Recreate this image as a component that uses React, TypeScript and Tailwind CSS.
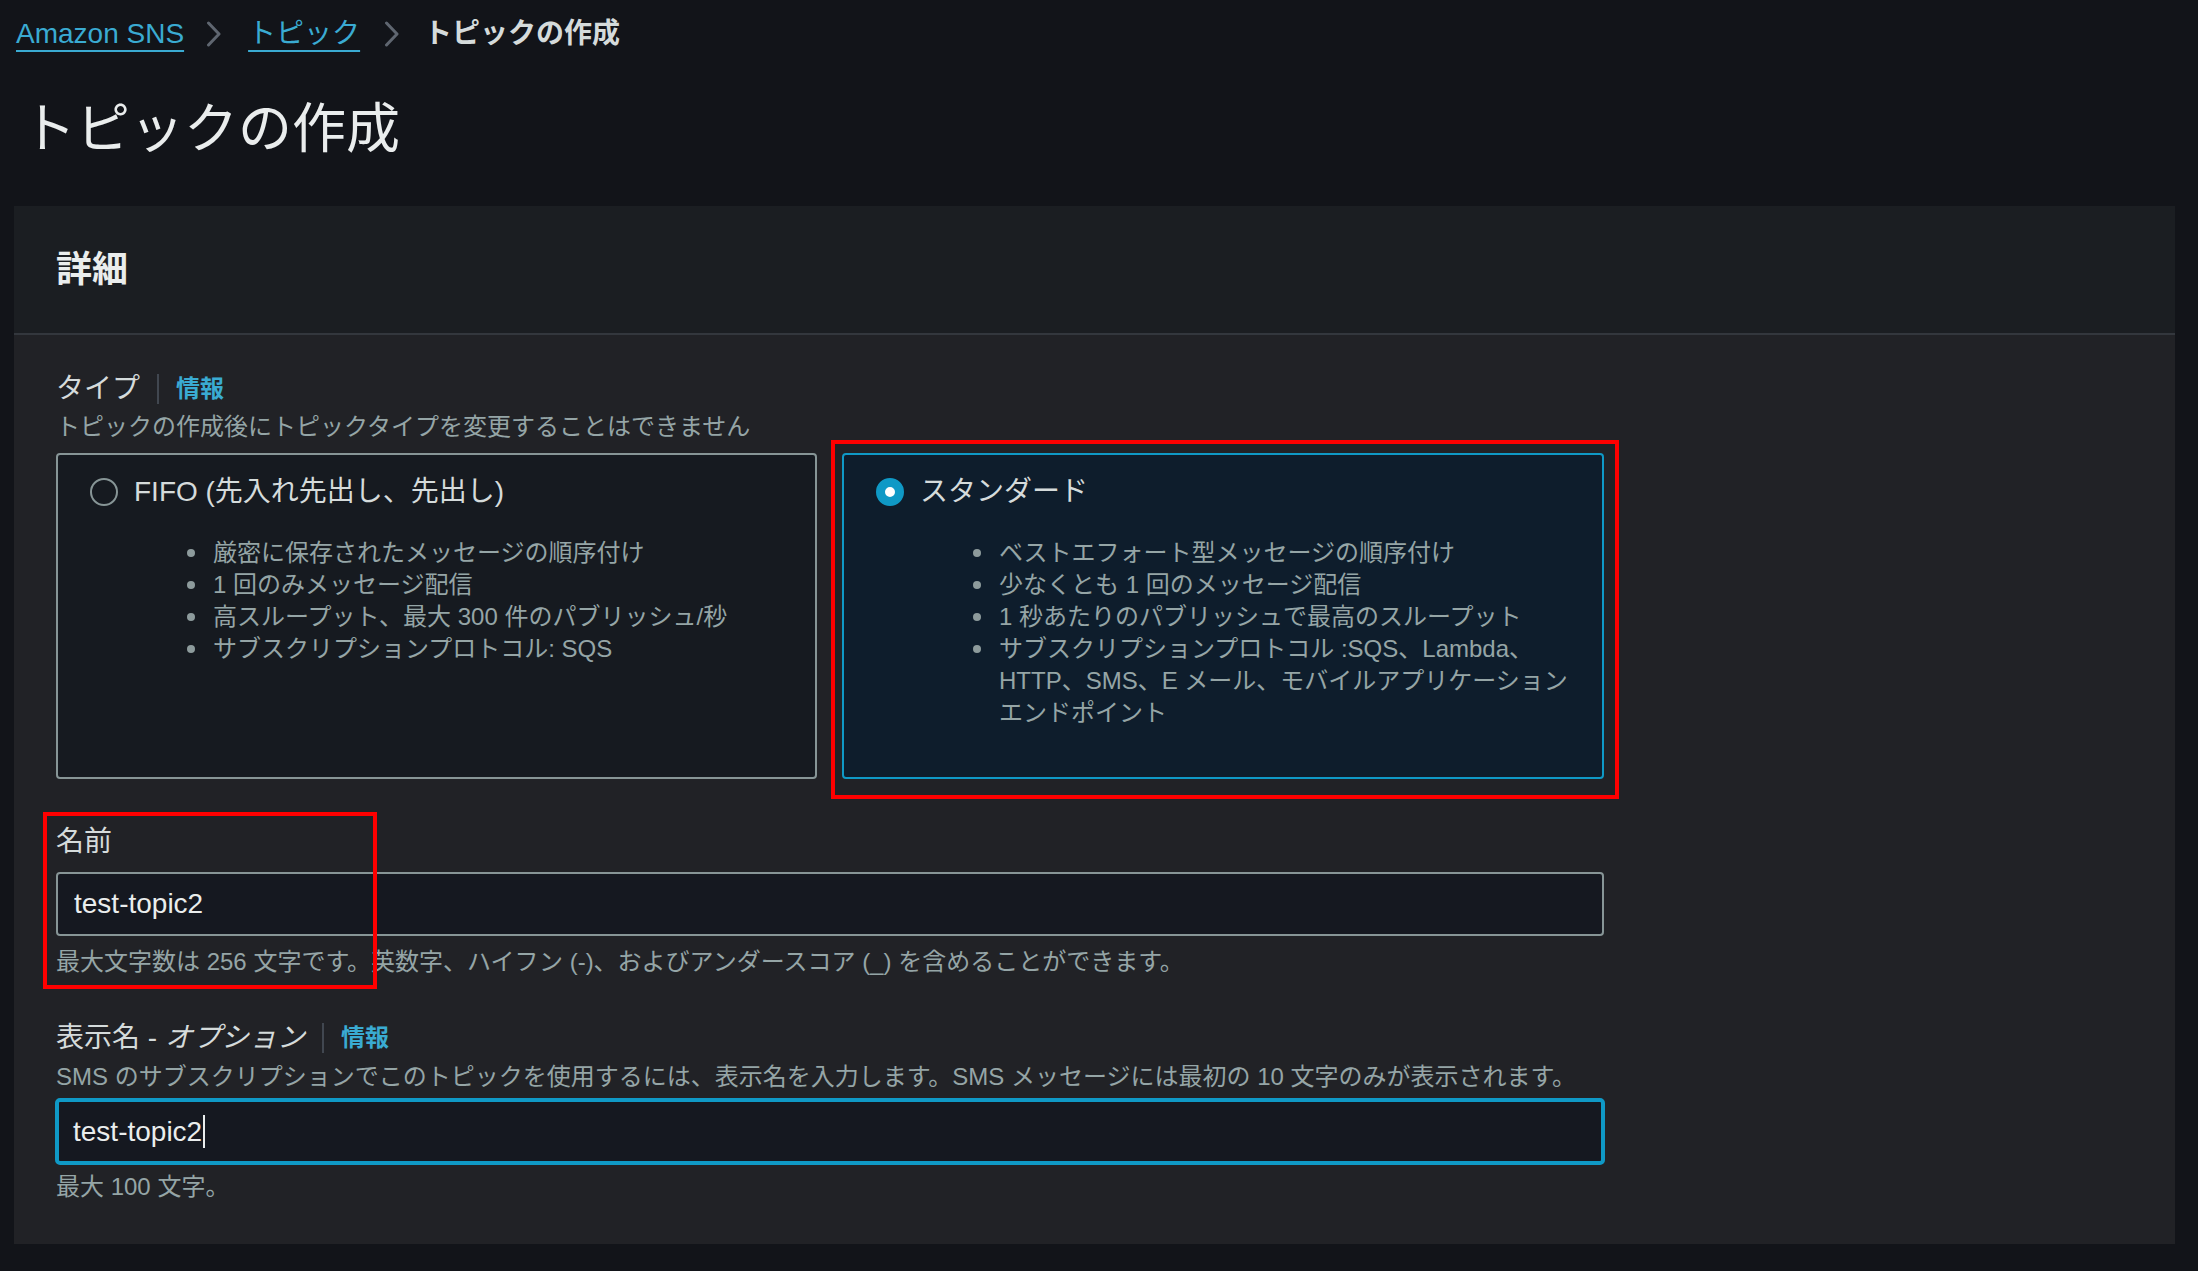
const fifoPoints = [
  '厳密に保存されたメッセージの順序付け',
  '1 回のみメッセージ配信',
  '高スループット、最大 300 件のパブリッシュ/秒',
  'サブスクリプションプロトコル: SQS',
]

function Bullet({ children }: { children: React.ReactNode }) {
  return (
    <li className="flex">
      <span className="flex h-[32px] w-[8px] shrink-0 items-center mr-[18px]">
        <span className="h-[8px] w-[8px] rounded-full bg-[#8d9b9c]" />
      </span>
      <span>{children}</span>
    </li>
  )
}

function Crumb() {
  return (
    <svg width="16" height="26" viewBox="0 0 16 26" fill="none" className="shrink-0">
      <polyline points="2.5,2 13,13 2.5,24" stroke="#5f6670" strokeWidth="3" strokeLinecap="round" strokeLinejoin="round" />
    </svg>
  )
}

export default function App() {
  return (
    <div className="min-h-screen bg-[#121419] pt-[14px] text-[#d5dbdb] font-['Liberation_Sans','Noto_Sans_CJK_JP',sans-serif]">
      {/* breadcrumbs */}
      <nav className="flex h-[40px] items-center pl-[16px] text-[28px] leading-[40px]">
        <a className="text-[#3aabd2] underline decoration-2 underline-offset-[7px]">Amazon SNS</a>
        <span className="ml-[22px] mr-[26px] flex items-center"><Crumb /></span>
        <a className="text-[#3aabd2] underline decoration-2 underline-offset-[7px]">トピック</a>
        <span className="ml-[24px] mr-[24px] flex items-center"><Crumb /></span>
        <span className="font-bold text-[#d5dbdb]">トピックの作成</span>
      </nav>

      <h1 className="mt-[43px] pl-[22px] text-[54px] leading-[64px] text-[#eaeded]">トピックの作成</h1>

      {/* container */}
      <div className="mt-[45px] ml-[14px] mr-[23px]">
        <div className="flex h-[129px] items-center border-b-2 border-[#33373d] bg-[#1b1e22] pl-[42px]">
          <h2 className="text-[36px] font-bold leading-[44px] text-[#eaeded]">詳細</h2>
        </div>

        <div className="bg-[#212226] pl-[42px] pt-[36px] pb-[41px]">
          <div className="w-[1548px]">
            <div className="flex h-[36px] items-center">
              <span className="text-[28px]">タイプ</span>
              <span className="mx-[17px] h-[30px] w-[2px] bg-[#414750]" />
              <a className="text-[24px] font-bold text-[#3aabd2]">情報</a>
            </div>
            <p className="mt-[4px] text-[24px] leading-[32px] text-[#95a5a6]">
              トピックの作成後にトピックタイプを変更することはできません
            </p>

            <div className="mt-[10px] grid grid-cols-[761px_762px] gap-[25px]">
              <div className="h-[326px] rounded-[4px] border-2 border-[#879596] bg-[#161a20] pt-[23px] pl-[32px] pr-[24px]">
                <div className="flex h-[28px] items-center gap-[16px]">
                  <span className="h-[28px] w-[28px] rounded-full border-2 border-[#879596]" />
                  <span className="text-[28px]">FIFO (先入れ先出し、先出し)</span>
                </div>
                <ul className="mt-[31px] pl-[97px] text-[24px] leading-[32px] text-[#95a5a6]">
                  {fifoPoints.map((p) => (
                    <Bullet key={p}>{p}</Bullet>
                  ))}
                </ul>
              </div>

              <div className="relative">
                <div className="h-[326px] rounded-[4px] border-2 border-[#0f99c6] bg-[#0e1d2c] pt-[23px] pl-[32px] pr-[24px]">
                  <div className="flex h-[28px] items-center gap-[16px]">
                    <span className="h-[28px] w-[28px] rounded-full border-[9px] border-[#0f99c6] bg-white" />
                    <span className="text-[28px]">スタンダード</span>
                  </div>
                  <ul className="mt-[31px] pl-[97px] text-[24px] leading-[32px] text-[#95a5a6] whitespace-nowrap">
                    <Bullet>ベストエフォート型メッセージの順序付け</Bullet>
                    <Bullet>少なくとも 1 回のメッセージ配信</Bullet>
                    <Bullet>1 秒あたりのパブリッシュで最高のスループット</Bullet>
                    <Bullet>
                      サブスクリプションプロトコル :SQS、Lambda、
                      <br />
                      HTTP、SMS、E メール、モバイルアプリケーション
                      <br />
                      エンドポイント
                    </Bullet>
                  </ul>
                </div>
                <div className="pointer-events-none absolute left-[-11px] top-[-13px] h-[359px] w-[788px] border-4 border-[#ff0000]" />
              </div>
            </div>

            {/* name */}
            <div className="relative mt-[45px]">
              <label className="block text-[28px] leading-[36px]">名前</label>
              <input
                readOnly
                value="test-topic2"
                className="mt-[12px] block h-[64px] w-full rounded-[4px] border-2 border-[#879596] bg-[#151820] pl-[16px] text-[28px] text-[#eaeded] outline-none"
              />
              <p className="mt-[10px] whitespace-nowrap text-[24px] leading-[32px] text-[#95a5a6]">
                最大文字数は 256 文字です。英数字、ハイフン (-)、およびアンダースコア (_) を含めることができます。
              </p>
              <div className="pointer-events-none absolute left-[-13px] top-[-12px] h-[177px] w-[334px] border-4 border-[#ff0000]" />
            </div>

            {/* display name */}
            <div className="mt-[42px]">
              <div className="flex h-[36px] items-center">
                <span className="text-[28px]">
                  表示名 - <i>オプション</i>
                </span>
                <span className="mx-[17px] h-[30px] w-[2px] bg-[#414750]" />
                <a className="text-[24px] font-bold text-[#3aabd2]">情報</a>
              </div>
              <p className="mt-[5px] whitespace-nowrap text-[24px] leading-[32px] text-[#95a5a6]">
                SMS のサブスクリプションでこのトピックを使用するには、表示名を入力します。SMS メッセージには最初の 10 文字のみが表示されます。
              </p>
              <div className="-mx-px mt-[5px] flex h-[67px] items-center rounded-[5px] border-4 border-[#0f99c6] bg-[#151820] pl-[14px] text-[28px] text-[#eaeded]">
                <span>test-topic2</span>
                <span className="ml-px h-[33px] w-[2px] bg-[#eaeded]" />
              </div>
              <p className="mt-[6px] text-[24px] leading-[32px] text-[#95a5a6]">最大 100 文字。</p>
            </div>
          </div>
        </div>
      </div>
    </div>
  )
}
